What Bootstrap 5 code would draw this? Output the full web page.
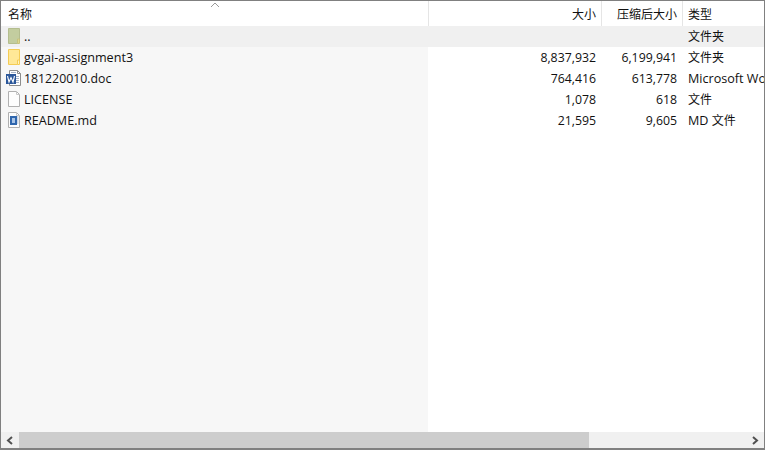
<!DOCTYPE html>
<html lang="zh">
<head>
<meta charset="utf-8">
<title>Archive</title>
<link href="https://cdn.jsdelivr.net/npm/bootstrap@5.3.0/dist/css/bootstrap.min.css" rel="stylesheet">
<style>
html,body{height:100%;margin:0;overflow:hidden;}
body{font-family:"Open Sans","Noto Sans CJK SC",sans-serif;font-size:12px;line-height:21px;color:#111;background:#fff;}
.frame{height:450px;width:765px;border:1px solid #808080;border-bottom-width:2px;background:#fff;overflow:hidden;}
.colName{width:428px;flex:none;}
.colSize{width:173px;flex:none;text-align:right;padding-right:6px;}
.colPacked{width:81px;flex:none;text-align:right;padding-right:6px;}
.colType{flex:1 1 0;min-width:0;white-space:nowrap;overflow:hidden;padding-left:5px;}
.headRow{height:25px;line-height:27px;}
.headRow .colName,.headRow .colSize,.headRow .colPacked{border-right:1px solid #e5e5e5;}
.headRow .colSize,.headRow .colPacked{padding-right:5px;}
.headRow .colName{padding-left:7px;position:relative;}
.sortArrow{position:absolute;left:209px;top:1px;width:10px;height:6px;}
.listBody{flex:1 1 0;min-height:0;background:linear-gradient(to right,#f7f7f7 427px,#fff 427px);}
.fileRow{height:21px;line-height:21px;}
.fileRow.picked{background:#f0f0f0;}
.nameCell{display:flex;align-items:center;padding-left:4px;gap:3px;font-size:12.6px;}
.digitName{font-size:12.3px;}
.fileRow .colSize,.fileRow .colPacked{font-size:12.3px;}
.latinText{font-size:12.6px;}
.fileIcon{width:16px;height:17px;flex:none;}
.hbar{height:16px;flex:none;background:#f0f0f0;}
.barBtn{width:18px;flex:none;}
.barThumb{width:570px;flex:none;background:#cdcdcd;}
</style>
</head>
<body>
<div class="frame d-flex flex-column">
  <div class="headRow d-flex">
    <div class="colName">名称
      <svg class="sortArrow" viewBox="0 0 10 6"><path d="M1 5 L5 1 L9 5" fill="none" stroke="#9a9a9a" stroke-width="1"/></svg>
    </div>
    <div class="colSize">大小</div>
    <div class="colPacked">压缩后大小</div>
    <div class="colType">类型</div>
  </div>
  <div class="listBody">
    <div class="fileRow picked d-flex">
      <div class="colName nameCell">
        <svg class="fileIcon" viewBox="0 0 16 17"><path d="M3.500 .5H14.500V11L12.500 15.500H3.500Z" fill="#c3cd9f" stroke="#b4bd8e"/><path d="M12.500 15.500V11H14.500V15.500Z" fill="#dcd990" stroke="#c7c27e"/></svg>
        <span>..</span>
      </div>
      <div class="colSize"></div><div class="colPacked"></div><div class="colType">文件夹</div>
    </div>
    <div class="fileRow d-flex">
      <div class="colName nameCell">
        <svg class="fileIcon" viewBox="0 0 16 17"><path d="M3.500 .5H14.500V11L12.500 15.500H3.500Z" fill="#ffe897" stroke="#f4cc55"/><path d="M12.500 15.500V11H14.500V15.500Z" fill="#fff3c4" stroke="#f4cc55"/></svg>
        <span>gvgai-assignment3</span>
      </div>
      <div class="colSize">8,837,932</div><div class="colPacked">6,199,941</div><div class="colType">文件夹</div>
    </div>
    <div class="fileRow d-flex">
      <div class="colName nameCell">
        <svg class="fileIcon" viewBox="0 0 16 17"><path d="M4.500 .5H12.500L15.500 3.500V15.500H4.500Z" fill="#fff" stroke="#8d8d8d"/><path d="M12.500 .5V3.500H15.500" fill="none" stroke="#8d8d8d"/><path d="M6 2.500h5M11 6.500h3M11 8.500h3M11 10.500h3M11 12.500h3" stroke="#a9b6c9"/><rect x="1" y="4" width="10" height="10" fill="#2b579a"/><path d="M2.500 6 L4 12 L6 7.500 L8 12 L9.500 6" fill="none" stroke="#fff" stroke-width="1.100"/></svg>
        <span class="digitName">181220010.doc</span>
      </div>
      <div class="colSize">764,416</div><div class="colPacked">613,778</div><div class="colType"><span class="latinText">Microsoft Word 97 - 2003 </span>文档</div>
    </div>
    <div class="fileRow d-flex">
      <div class="colName nameCell">
        <svg class="fileIcon" viewBox="0 0 16 17"><path d="M3.500 .5H11.500L14.500 3.500V15.500H3.500Z" fill="#fdfdfd" stroke="#b0b0b0"/><path d="M11.500 .5V3.500H14.500" fill="none" stroke="#c8c8c8"/></svg>
        <span>LICENSE</span>
      </div>
      <div class="colSize">1,078</div><div class="colPacked">618</div><div class="colType">文件</div>
    </div>
    <div class="fileRow d-flex">
      <div class="colName nameCell">
        <svg class="fileIcon" viewBox="0 0 16 17"><path d="M3.500 .5H11.500L14.500 3.500V15.500H3.500Z" fill="#fdfdfd" stroke="#b0b0b0"/><path d="M11.500 .5V3.500H14.500" fill="none" stroke="#c8c8c8"/><rect x="5" y="4" width="7" height="9" fill="#2f66ad"/><rect x="7" y="6" width="3" height="5" fill="#a9c4e6"/><path d="M12 5h1.500M12 7h1.500M12 9h1.500M12 11h1.500" stroke="#9fb4d0"/></svg>
        <span>README.md</span>
      </div>
      <div class="colSize">21,595</div><div class="colPacked">9,605</div><div class="colType"><span class="latinText">MD </span>文件</div>
    </div>
  </div>
  <div class="hbar d-flex">
    <div class="barBtn d-flex align-items-center justify-content-center">
      <svg width="8" height="9" viewBox="0 0 8 9"><path d="M6 1 L2 4.500 L6 8" fill="none" stroke="#505050" stroke-width="2"/></svg>
    </div>
    <div class="barThumb"></div>
    <div class="flex-grow-1"></div>
    <div class="barBtn d-flex align-items-center justify-content-center">
      <svg width="8" height="9" viewBox="0 0 8 9"><path d="M2 1 L6 4.500 L2 8" fill="none" stroke="#505050" stroke-width="2"/></svg>
    </div>
  </div>
</div>
<script src="https://cdn.jsdelivr.net/npm/bootstrap@5.3.0/dist/js/bootstrap.bundle.min.js"></script>
</body>
</html>
